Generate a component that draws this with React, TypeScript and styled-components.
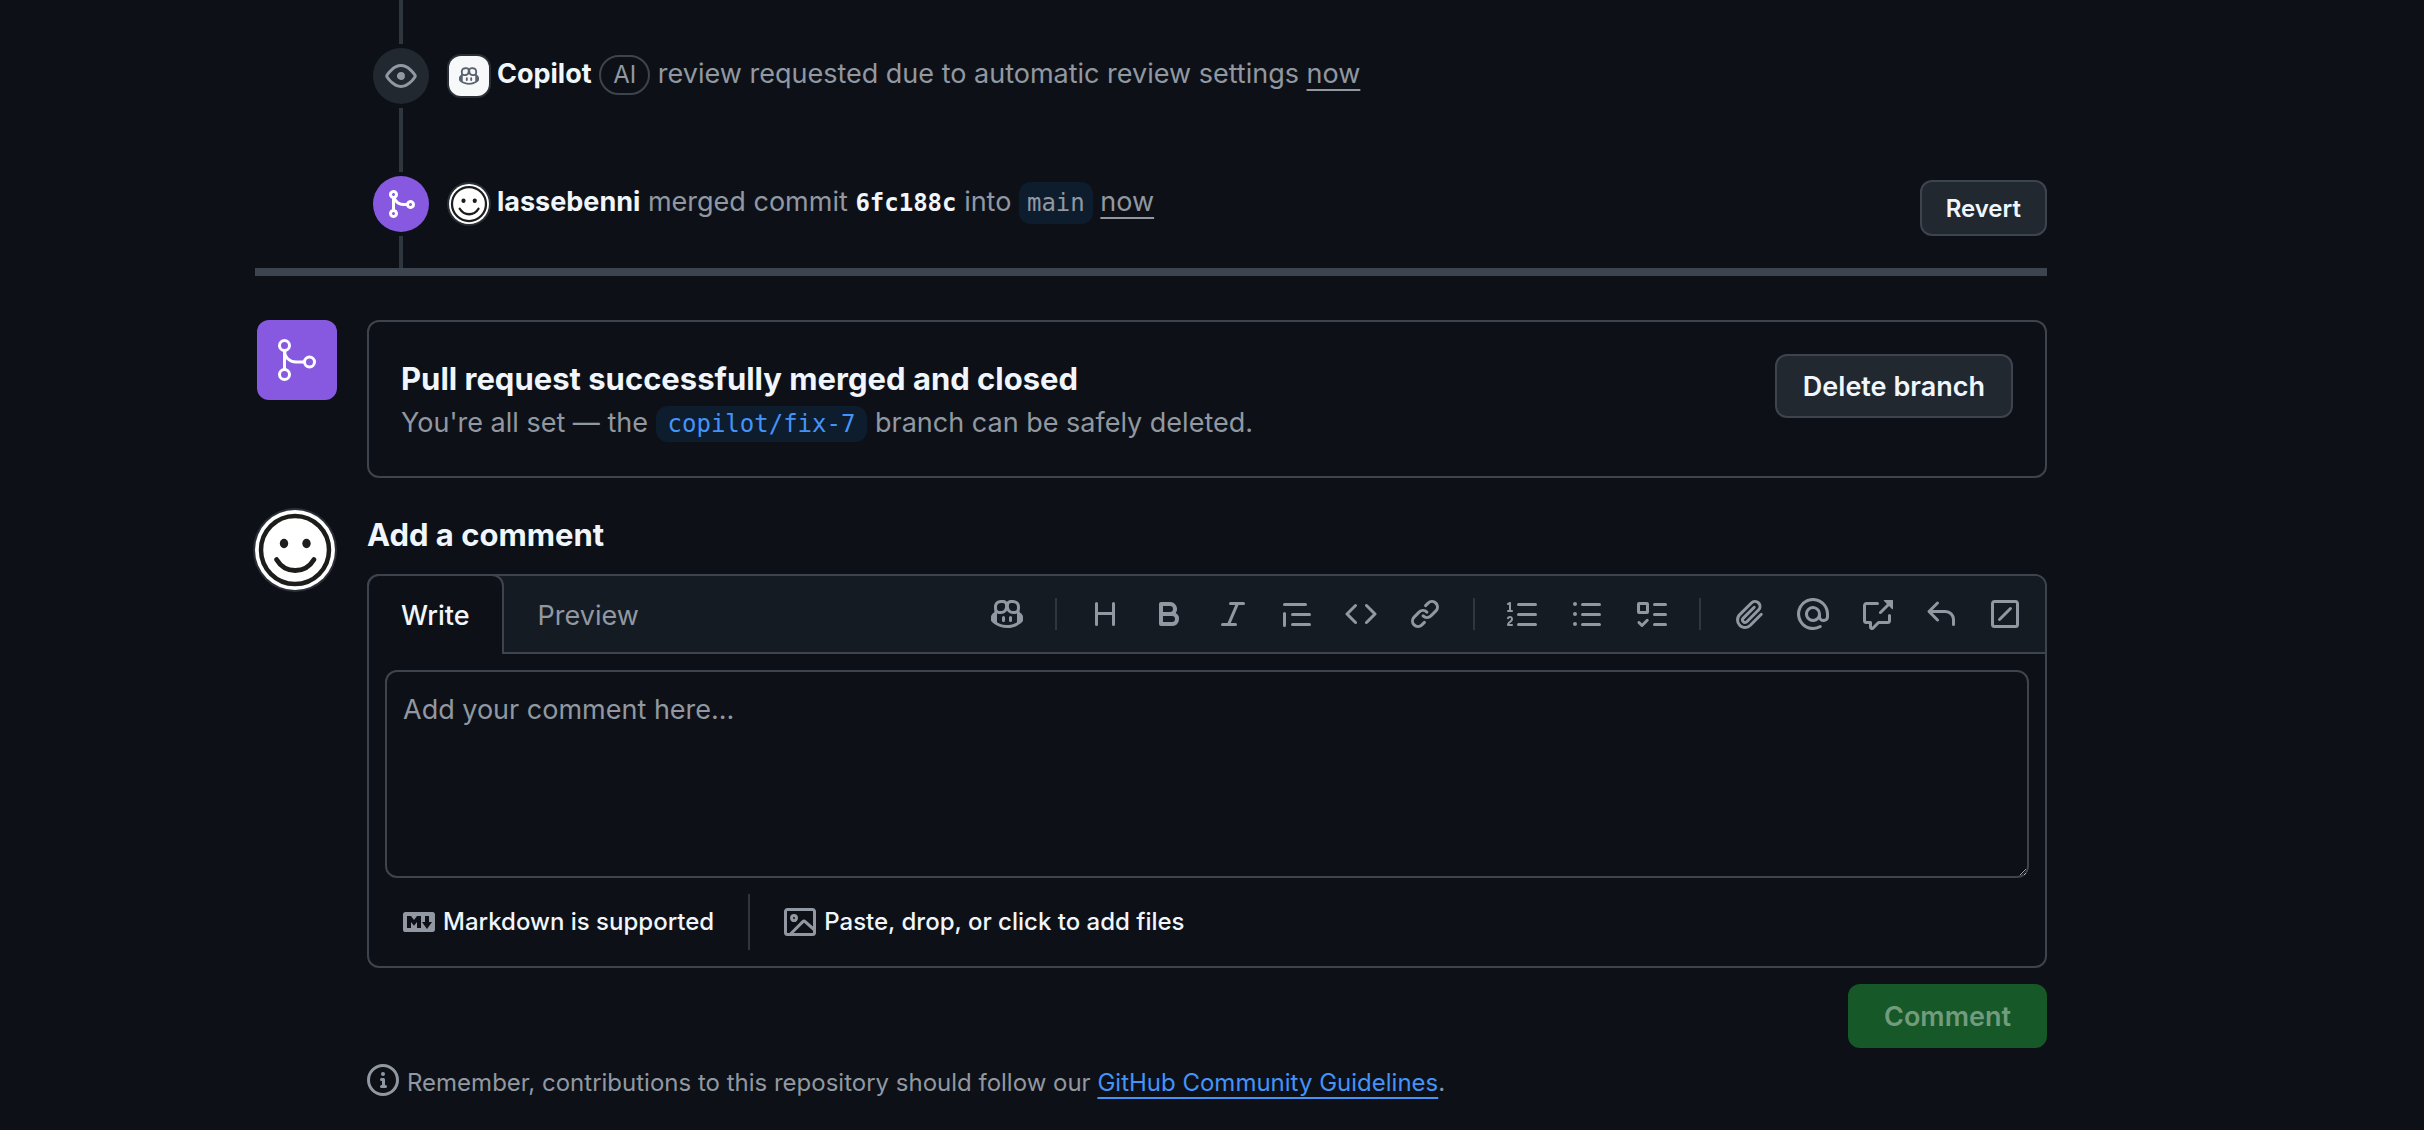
import React from "react";
import styled, { createGlobalStyle, css } from "styled-components";

const color = {
  page: "#0d1117",
  panel: "#151b23",
  control: "#212830",
  border: "#3d444d",
  line: "#30363e",
  text: "#f0f6fc",
  muted: "#9198a1",
  link: "#4493f8",
  linkBg: "#0e1d2e",
  done: "#8759e1",
  success: "#165827",
  successText: "#739b7e",
};

const sans = `Inter, "Noto Sans", "Liberation Sans", sans-serif`;
const mono = `"DejaVu Sans Mono", "Liberation Mono", monospace`;

const GlobalStyle = createGlobalStyle`
  *, *::before, *::after { box-sizing: border-box; }
  html { color-scheme: dark; background: ${color.page}; }
  body {
    margin: 0;
    background: ${color.page};
    color: ${color.text};
    font-family: ${sans};
    font-size: 27px;
    line-height: 42px;
  }
  button, textarea { font-family: inherit; }
`;

const paths = {
  eye: "M8 2c1.981 0 3.671.992 4.933 2.078 1.27 1.091 2.187 2.345 2.637 3.023a1.62 1.62 0 0 1 0 1.798c-.45.678-1.367 1.932-2.637 3.023C11.67 13.008 9.981 14 8 14c-1.981 0-3.671-.992-4.933-2.078C1.797 10.83.88 9.576.43 8.898a1.62 1.62 0 0 1 0-1.798c.45-.677 1.367-1.931 2.637-3.022C4.33 2.992 6.019 2 8 2ZM1.679 7.932a.12.12 0 0 0 0 .136c.411.622 1.241 1.75 2.366 2.717C5.176 11.758 6.527 12.5 8 12.5c1.473 0 2.825-.742 3.955-1.715 1.124-.967 1.954-2.096 2.366-2.717a.12.12 0 0 0 0-.136c-.412-.621-1.242-1.75-2.366-2.717C10.824 4.242 9.473 3.5 8 3.5c-1.473 0-2.825.742-3.955 1.715-1.124.967-1.954 2.096-2.366 2.717ZM8 10a2 2 0 1 1-.001-3.999A2 2 0 0 1 8 10Z",
  merge: "M5.45 5.154A4.25 4.25 0 0 0 9.25 7.5h1.378a2.251 2.251 0 1 1 0 1.5H9.25A5.734 5.734 0 0 1 5 7.123v3.505a2.25 2.25 0 1 1-1.5 0V5.372a2.25 2.25 0 1 1 1.95-.218ZM4.25 13.5a.75.75 0 1 0 0-1.5.75.75 0 0 0 0 1.5Zm8.5-4.5a.75.75 0 1 0 0-1.5.75.75 0 0 0 0 1.5ZM5 3.25a.75.75 0 1 0 0 .005V3.25Z",
  copilot: "M7.998 15.035c-4.562 0-7.873-2.914-7.998-3.749V9.338c.085-.628.677-1.686 1.588-2.065.013-.07.024-.143.036-.218.029-.183.06-.384.126-.612-.201-.508-.254-1.084-.254-1.656 0-.87.128-1.769.693-2.484.579-.733 1.494-1.124 2.724-1.261 1.206-.134 2.262.034 2.944.765.05.053.096.108.139.165.044-.057.094-.112.143-.165.682-.731 1.738-.899 2.944-.765 1.23.137 2.145.528 2.724 1.261.566.715.693 1.614.693 2.484 0 .572-.053 1.148-.254 1.656.066.228.098.429.126.612.012.076.024.148.037.218.924.385 1.522 1.471 1.591 2.095v1.872c0 .766-3.351 3.795-8.002 3.795Zm0-1.485c2.28 0 4.584-1.11 5.002-1.433V7.862l-.023-.116c-.49.21-1.075.291-1.727.291-1.146 0-2.059-.327-2.71-.991A3.222 3.222 0 0 1 8 6.303a3.24 3.24 0 0 1-.544.743c-.65.664-1.563.991-2.71.991-.652 0-1.236-.081-1.727-.291l-.023.116v4.255c.419.323 2.722 1.433 5.002 1.433ZM6.762 2.83c-.193-.206-.637-.413-1.682-.297-1.019.113-1.479.404-1.713.7-.247.312-.369.789-.369 1.554 0 .793.129 1.171.308 1.371.162.181.519.379 1.442.379.853 0 1.339-.235 1.638-.54.315-.322.527-.827.617-1.553.117-.935-.037-1.395-.241-1.614Zm4.155-.297c-1.044-.116-1.488.091-1.681.297-.204.219-.359.679-.242 1.614.091.726.303 1.231.618 1.553.299.305.784.54 1.638.54.922 0 1.28-.198 1.442-.379.179-.2.308-.578.308-1.371 0-.765-.123-1.242-.37-1.554-.233-.296-.693-.587-1.713-.7ZM6.25 9.037a.75.75 0 0 1 .75.75v1.501a.75.75 0 0 1-1.5 0V9.787a.75.75 0 0 1 .75-.75Zm4.25.75v1.501a.75.75 0 0 1-1.5 0V9.787a.75.75 0 0 1 1.5 0Z",
  heading: "M3.75 2a.75.75 0 0 1 .75.75V7h7V2.75a.75.75 0 0 1 1.5 0v10.5a.75.75 0 0 1-1.5 0V8.5h-7v4.75a.75.75 0 0 1-1.5 0V2.75A.75.75 0 0 1 3.75 2Z",
  bold: "M4 2h4.5a3.501 3.501 0 0 1 2.852 5.53A3.499 3.499 0 0 1 9.5 14H4a1 1 0 0 1-1-1V3a1 1 0 0 1 1-1Zm1 7v3h4.5a1.5 1.5 0 0 0 0-3Zm3.5-2a1.5 1.5 0 0 0 0-3H5v3Z",
  italic: "M6 2.75A.75.75 0 0 1 6.75 2h6.5a.75.75 0 0 1 0 1.5h-2.505l-3.858 9H9.25a.75.75 0 0 1 0 1.5h-6.5a.75.75 0 0 1 0-1.5h2.505l3.858-9H6.75A.75.75 0 0 1 6 2.75Z",
  quote: "M1.75 2.5h10.5a.75.75 0 0 1 0 1.5H1.75a.75.75 0 0 1 0-1.5Zm4 5h8.5a.75.75 0 0 1 0 1.5h-8.5a.75.75 0 0 1 0-1.5Zm0 5h8.5a.75.75 0 0 1 0 1.5h-8.5a.75.75 0 0 1 0-1.5ZM2.5 7.75v6a.75.75 0 0 1-1.5 0v-6a.75.75 0 0 1 1.5 0Z",
  code: "m11.28 3.22 4.25 4.25a.75.75 0 0 1 0 1.06l-4.25 4.25a.749.749 0 0 1-1.275-.326.749.749 0 0 1 .215-.734L13.94 8l-3.72-3.72a.749.749 0 0 1 .326-1.275.749.749 0 0 1 .734.215Zm-6.56 0a.751.751 0 0 1 1.042.018.751.751 0 0 1 .018 1.042L2.06 8l3.72 3.72a.749.749 0 0 1-.326 1.275.749.749 0 0 1-.734-.215L.47 8.53a.75.75 0 0 1 0-1.06Z",
  link: "m7.775 3.275 1.25-1.25a3.5 3.5 0 1 1 4.95 4.95l-2.5 2.5a3.5 3.5 0 0 1-4.95 0 .751.751 0 0 1 .018-1.042.751.751 0 0 1 1.042-.018 1.998 1.998 0 0 0 2.83 0l2.5-2.5a2.002 2.002 0 0 0-2.83-2.83l-1.25 1.25a.751.751 0 0 1-1.042-.018.751.751 0 0 1-.018-1.042Zm-4.69 9.64a1.998 1.998 0 0 0 2.83 0l1.25-1.25a.751.751 0 0 1 1.042.018.751.751 0 0 1 .018 1.042l-1.25 1.25a3.5 3.5 0 1 1-4.95-4.95l2.5-2.5a3.5 3.5 0 0 1 4.95 0 .751.751 0 0 1-.018 1.042.751.751 0 0 1-1.042.018 1.998 1.998 0 0 0-2.83 0l-2.5 2.5a1.998 1.998 0 0 0 0 2.83Z",
  ordered: "M5 3.25a.75.75 0 0 1 .75-.75h8.5a.75.75 0 0 1 0 1.5h-8.5A.75.75 0 0 1 5 3.25Zm0 5a.75.75 0 0 1 .75-.75h8.5a.75.75 0 0 1 0 1.5h-8.5A.75.75 0 0 1 5 8.25Zm0 5a.75.75 0 0 1 .75-.75h8.5a.75.75 0 0 1 0 1.5h-8.5a.75.75 0 0 1-.75-.75ZM.924 10.32a.5.5 0 0 1-.851-.525l.001-.001.001-.002.002-.004.007-.011c.097-.144.215-.273.348-.384.228-.19.588-.392 1.068-.392.468 0 .858.181 1.126.484.259.294.377.673.377 1.038 0 .987-.686 1.495-1.156 1.845l-.047.035c-.303.225-.522.4-.654.597h1.357a.5.5 0 0 1 0 1H.5a.5.5 0 0 1-.5-.5c0-1.005.692-1.52 1.167-1.875l.035-.025c.531-.396.8-.625.8-1.078a.57.57 0 0 0-.128-.376C1.806 10.068 1.695 10 1.5 10a.658.658 0 0 0-.429.163.835.835 0 0 0-.144.153ZM2.003 2.5V6h.503a.5.5 0 0 1 0 1H.5a.5.5 0 0 1 0-1h.503V3.308l-.28.14a.5.5 0 0 1-.446-.895l1.003-.5a.5.5 0 0 1 .723.447Z",
  unordered: "M5.75 2.5h8.5a.75.75 0 0 1 0 1.5h-8.5a.75.75 0 0 1 0-1.5Zm0 5h8.5a.75.75 0 0 1 0 1.5h-8.5a.75.75 0 0 1 0-1.5Zm0 5h8.5a.75.75 0 0 1 0 1.5h-8.5a.75.75 0 0 1 0-1.5ZM2 14a1 1 0 1 1 0-2 1 1 0 0 1 0 2Zm1-6a1 1 0 1 1-2 0 1 1 0 0 1 2 0ZM2 4a1 1 0 1 1 0-2 1 1 0 0 1 0 2Z",
  tasks: "M2 2h4a1 1 0 0 1 1 1v4a1 1 0 0 1-1 1H2a1 1 0 0 1-1-1V3a1 1 0 0 1 1-1Zm4.655 8.595a.75.75 0 0 1 0 1.06L4.03 14.28a.75.75 0 0 1-1.06 0l-1.5-1.5a.749.749 0 0 1 .326-1.275.749.749 0 0 1 .734.215l.97.97 2.095-2.095a.75.75 0 0 1 1.06 0ZM9.75 2.5h5.5a.75.75 0 0 1 0 1.5h-5.5a.75.75 0 0 1 0-1.5Zm0 5h5.5a.75.75 0 0 1 0 1.5h-5.5a.75.75 0 0 1 0-1.5Zm0 5h5.5a.75.75 0 0 1 0 1.5h-5.5a.75.75 0 0 1 0-1.5Zm-7.25-9v3h3v-3Z",
  paperclip: "M12.212 3.02a1.753 1.753 0 0 0-2.478.003l-5.83 5.83a3.007 3.007 0 0 0-.88 2.127c0 .795.315 1.551.88 2.116.567.567 1.333.89 2.126.89.79 0 1.548-.321 2.116-.89l5.48-5.48a.75.75 0 0 1 1.061 1.06l-5.48 5.48a4.492 4.492 0 0 1-3.177 1.33c-1.2 0-2.345-.487-3.187-1.33a4.483 4.483 0 0 1-1.32-3.177c0-1.195.475-2.341 1.32-3.186l5.83-5.83a3.25 3.25 0 0 1 5.553 2.297c0 .863-.343 1.691-.953 2.301L7.439 12.39c-.375.377-.884.59-1.416.593a1.998 1.998 0 0 1-1.412-.593 1.992 1.992 0 0 1 0-2.828l5.48-5.48a.751.751 0 0 1 1.042.018.751.751 0 0 1 .018 1.042l-5.48 5.48a.492.492 0 0 0 0 .707.499.499 0 0 0 .352.154.51.51 0 0 0 .356-.154l5.833-5.827a1.755 1.755 0 0 0 0-2.481Z",
  mention: "M4.75 2.37a6.501 6.501 0 0 0 6.5 11.26.75.75 0 0 1 .75 1.298A7.999 7.999 0 0 1 .989 4.148 8 8 0 0 1 16 7.75v1.5a2.75 2.75 0 0 1-5.072 1.475 3.999 3.999 0 0 1-6.65-4.19A4 4 0 0 1 12 8v1.25a1.25 1.25 0 0 0 2.5 0V7.867a6.5 6.5 0 0 0-9.75-5.496ZM10.5 8a2.5 2.5 0 1 0-5 0 2.5 2.5 0 0 0 5 0Z",
  reference: "M2.75 3.5a.25.25 0 0 0-.25.25v7.5c0 .138.112.25.25.25h2a.75.75 0 0 1 .75.75v2.19l2.72-2.72a.749.749 0 0 1 .53-.22h4.5a.25.25 0 0 0 .25-.25v-2.5a.75.75 0 0 1 1.5 0v2.5A1.75 1.75 0 0 1 13.25 13H9.06l-2.573 2.573A1.458 1.458 0 0 1 4 14.543V13H2.75A1.75 1.75 0 0 1 1 11.25v-7.5C1 2.784 1.784 2 2.75 2h5.5a.75.75 0 0 1 0 1.5ZM16 1.25v4.146a.25.25 0 0 1-.427.177L14.03 4.03l-3.75 3.75a.749.749 0 0 1-1.275-.326.749.749 0 0 1 .215-.734l3.75-3.75-1.543-1.543A.25.25 0 0 1 11.604 1h4.146a.25.25 0 0 1 .25.25Z",
  reply: "M6.78 1.97a.75.75 0 0 1 0 1.06L3.81 6h6.44A4.75 4.75 0 0 1 15 10.75v2.5a.75.75 0 0 1-1.5 0v-2.5a3.25 3.25 0 0 0-3.25-3.25H3.81l2.97 2.97a.749.749 0 0 1-.326 1.275.749.749 0 0 1-.734-.215L1.47 7.28a.75.75 0 0 1 0-1.06l4.25-4.25a.75.75 0 0 1 1.06 0Z",
  slash: "M13.25 1c.966 0 1.75.784 1.75 1.75v10.5A1.75 1.75 0 0 1 13.25 15H2.75A1.75 1.75 0 0 1 1 13.25V2.75C1 1.784 1.784 1 2.75 1ZM2.75 2.5a.25.25 0 0 0-.25.25v10.5c0 .138.112.25.25.25h10.5a.25.25 0 0 0 .25-.25V2.75a.25.25 0 0 0-.25-.25Zm8.53 3.28-5.5 5.5a.751.751 0 0 1-1.042-.018.751.751 0 0 1-.018-1.042l5.5-5.5a.751.751 0 0 1 1.042.018.751.751 0 0 1 .018 1.042Z",
  markdown: "M14.85 3c.63 0 1.15.52 1.14 1.15v7.7c0 .63-.51 1.15-1.15 1.15H1.15C.52 13 0 12.48 0 11.84V4.15C0 3.52.52 3 1.15 3ZM9 11V5H7L5.5 7 4 5H2v6h2V8l1.5 1.92L7 8v3Zm2.99.5L14.5 8H13V5h-2v3H9.5Z",
  image: "M16 13.25A1.75 1.75 0 0 1 14.25 15H1.75A1.75 1.75 0 0 1 0 13.25V2.75C0 1.784.784 1 1.75 1h12.5c.966 0 1.75.784 1.75 1.75ZM1.75 2.5a.25.25 0 0 0-.25.25v10.5c0 .138.112.25.25.25h.94l.03-.03 6.077-6.078a1.75 1.75 0 0 1 2.412-.06L14.5 10.31V2.75a.25.25 0 0 0-.25-.25Zm12.5 11a.25.25 0 0 0 .25-.25v-.917l-4.298-3.889a.25.25 0 0 0-.344.009L4.81 13.5ZM7 6a2 2 0 1 1-3.999.001A2 2 0 0 1 7 6ZM5.5 6a.5.5 0 1 0-1 0 .5.5 0 0 0 1 0Z",
  info: "M0 8a8 8 0 1 1 16 0A8 8 0 0 1 0 8Zm8-6.5a6.5 6.5 0 1 0 0 13 6.5 6.5 0 0 0 0-13ZM6.5 7.75A.75.75 0 0 1 7.25 7h1a.75.75 0 0 1 .75.75v2.75h.25a.75.75 0 0 1 0 1.5h-2a.75.75 0 0 1 0-1.5h.25v-2h-.25a.75.75 0 0 1-.75-.75ZM8 6a1 1 0 1 1 0-2 1 1 0 0 1 0 2Z",
};

type IconName = keyof typeof paths;

const IconSvg = styled.svg`
  display: block;
  flex: none;
  fill: currentColor;
`;

function Icon({ name, size = 32 }: { name: IconName; size?: number }) {
  return (
    <IconSvg viewBox="0 0 16 16" width={size} height={size} aria-hidden="true">
      <path d={paths[name]} />
    </IconSvg>
  );
}

function LargeMergeIcon() {
  return (
    <svg width="48" height="48" viewBox="0 0 24 24" fill="none" stroke="#fff" strokeWidth="1.5" aria-hidden="true">
      <circle cx="5.75" cy="4.75" r="2.5" />
      <circle cx="5.75" cy="19.25" r="2.5" />
      <circle cx="18.25" cy="13" r="2.5" />
      <path d="M5.75 7.25v9.5M5.75 7.25c0 3.4 2.4 5.75 5.75 5.75h4.25" />
    </svg>
  );
}

const Page = styled.main`
  padding: 0 377px 24px 255px;
`;

const Timeline = styled.section`
  border-bottom: 8px solid ${color.border};
  margin-bottom: 44px;
`;

const TimelineItem = styled.div`
  display: flex;
  gap: 20px;
  padding-left: 118px;
`;

const Rail = styled.div`
  display: flex;
  flex-direction: column;
  align-items: center;
  gap: 4px;
  width: 56px;
`;

const RailLine = styled.span<{ $length: number }>`
  width: 4px;
  height: ${(p) => p.$length}px;
  background: ${color.line};
`;

const Badge = styled.span<{ $done?: boolean }>`
  display: flex;
  align-items: center;
  justify-content: center;
  width: 56px;
  height: 56px;
  border-radius: 50%;
  color: ${(p) => (p.$done ? "#fff" : color.muted)};
  background: ${(p) => (p.$done ? color.done : color.control)};
`;

const TimelineBody = styled.div<{ $lead: number }>`
  flex: 1;
  display: flex;
  align-items: flex-start;
  justify-content: space-between;
  padding-top: ${(p) => p.$lead + 8}px;
  color: ${color.muted};
`;

const EventText = styled.p`
  margin: 0;
  line-height: 44px;
`;

const avatarRing = css`
  background: #fff;
  box-shadow: 0 0 0 2px #2b3038;
`;

const inlineAvatar = css`
  width: 40px;
  height: 40px;
  margin-right: 8px;
  vertical-align: middle;
`;

const CopilotAvatar = styled.span`
  ${avatarRing}
  ${inlineAvatar}
  display: inline-flex;
  align-items: center;
  justify-content: center;
  border-radius: 12px;
  background: #f6f8fa;
  color: #59636e;
`;

const FaceSvg = styled.svg<{ $inline?: boolean }>`
  ${avatarRing}
  border-radius: 50%;
  ${(p) =>
    p.$inline
      ? inlineAvatar
      : css`
          display: block;
          width: 80px;
          height: 80px;
        `}
`;

function Face({ inline }: { inline?: boolean }) {
  return (
    <FaceSvg $inline={inline} viewBox="0 0 80 80" role="img" aria-label="lassebenni">
      <circle cx="40" cy="40" r="34" fill="#fff" stroke="#1d1d1b" strokeWidth="4.5" />
      <ellipse cx="29" cy="33.5" rx="4.2" ry="4.7" fill="#1d1d1b" />
      <ellipse cx="51.5" cy="33.5" rx="4.2" ry="4.7" fill="#1d1d1b" />
      <path d="M21.5 49.5C26 57 33 60.5 40.2 60.5S54.5 57 59 49.5" fill="none" stroke="#1d1d1b" strokeWidth="4.8" strokeLinecap="round" />
    </FaceSvg>
  );
}

const Actor = styled.a`
  color: ${color.text};
  font-weight: 700;
  text-decoration: none;
`;

const AiLabel = styled.span`
  display: inline-block;
  padding: 0 12px;
  border: 2px solid ${color.border};
  border-radius: 20px;
  font-size: 24px;
  line-height: 36px;
`;

const TimeLink = styled.a`
  color: inherit;
  text-decoration: underline;
  text-decoration-thickness: 2px;
  text-underline-offset: 6px;
`;

const CommitLink = styled.a`
  color: ${color.text};
  font: 700 24px ${mono};
  text-decoration: none;
`;

const BranchTag = styled.a<{ $accent?: boolean }>`
  padding: ${(p) => (p.$accent ? "4px 12px" : "7px 8px")};
  border-radius: 12px;
  background: ${color.linkBg};
  color: ${(p) => (p.$accent ? color.link : color.muted)};
  font: 24px ${mono};
  text-decoration: none;
`;

const Button = styled.button<{ $small?: boolean }>`
  flex: none;
  height: ${(p) => (p.$small ? 56 : 64)}px;
  padding: 0 ${(p) => (p.$small ? 24 : 26)}px;
  border: 2px solid ${color.border};
  border-radius: 12px;
  background: ${color.control};
  color: ${color.text};
  font-size: ${(p) => (p.$small ? 24 : 27)}px;
  font-weight: 600;
`;

const SubmitButton = styled(Button)`
  align-self: flex-end;
  padding: 0 34px;
  border-color: ${color.success};
  background: ${color.success};
  color: ${color.successText};
`;

const Row = styled.section`
  display: grid;
  grid-template-columns: 82px minmax(0, 1fr);
  column-gap: 30px;
  align-items: start;
  margin-bottom: 32px;
`;

const MergeTile = styled.span`
  justify-self: end;
  display: flex;
  align-items: center;
  justify-content: center;
  width: 80px;
  height: 80px;
  border-radius: 12px;
  background: ${color.done};
`;

const MergeCard = styled.div`
  display: flex;
  justify-content: space-between;
  align-items: flex-start;
  padding: 32px;
  border: 2px solid ${color.border};
  border-radius: 12px;
`;

const Title = styled.h2`
  margin: 0;
  padding-top: 2px;
  font-size: 31px;
  line-height: 46px;
  font-weight: 700;
`;

const CardText = styled.p`
  margin: 0;
  color: ${color.muted};
`;

const CommentForm = styled.form`
  display: flex;
  flex-direction: column;
  gap: 16px;
`;

const Editor = styled.div`
  border: 2px solid ${color.border};
  border-radius: 12px;
`;

const EditorHeader = styled.div`
  display: flex;
  justify-content: space-between;
  height: 78px;
  border-bottom: 2px solid ${color.border};
  border-radius: 10px 10px 0 0;
  background: ${color.panel};
`;

const Tabs = styled.div`
  display: flex;
  margin: -2px;
`;

const Tab = styled.button<{ $active?: boolean }>`
  padding: 0 32px;
  border: 2px solid transparent;
  border-bottom: 0;
  border-radius: 12px 12px 0 0;
  background: transparent;
  color: ${color.muted};
  font-size: 27px;
  ${(p) =>
    p.$active &&
    css`
      border-color: ${color.border};
      background: ${color.page};
      color: ${color.text};
      font-weight: 500;
    `}
`;

const Toolbar = styled.div`
  display: flex;
  align-items: center;
  padding-right: 8px;
`;

const ToolButton = styled.button`
  display: flex;
  align-items: center;
  justify-content: center;
  width: 64px;
  height: 64px;
  padding: 0;
  border: 0;
  background: transparent;
  color: ${color.muted};
`;

const Divider = styled.span<{ $length: number }>`
  width: 2px;
  height: ${(p) => p.$length}px;
  margin: 0 16px;
  background: ${color.line};
`;

const CommentBox = styled.textarea`
  display: block;
  width: calc(100% - 32px);
  height: 208px;
  margin: 16px;
  padding: 16px;
  border: 2px solid ${color.border};
  border-radius: 12px;
  background: ${color.page};
  color: ${color.text};
  font-size: 27px;
  line-height: 44px;
  resize: vertical;
  &::placeholder {
    color: ${color.muted};
    opacity: 1;
  }
`;

const EditorFooter = styled.div`
  display: flex;
  align-items: center;
  padding: 0 16px 16px;
`;

const footerAction = css`
  display: flex;
  align-items: center;
  gap: 8px;
  height: 56px;
  padding: 0 18px;
  border: 0;
  background: transparent;
  color: ${color.text};
  font-size: 24px;
  font-weight: 500;
  line-height: 36px;
  text-decoration: none;
  svg {
    color: ${color.muted};
  }
`;

const FooterLink = styled.a`
  ${footerAction}
`;

const FooterButton = styled.button`
  ${footerAction}
`;

const Reminder = styled.p`
  display: flex;
  gap: 8px;
  margin: 0;
  color: ${color.muted};
  font-size: 24px;
  line-height: 38px;
`;

const GuideLink = styled(TimeLink)`
  color: ${color.link};
`;

const toolGroups: [IconName, string][][] = [
  [["copilot", "Copilot"]],
  [
    ["heading", "Heading"],
    ["bold", "Bold"],
    ["italic", "Italic"],
    ["quote", "Quote"],
    ["code", "Code"],
    ["link", "Link"],
  ],
  [
    ["ordered", "Numbered list"],
    ["unordered", "Unordered list"],
    ["tasks", "Task list"],
  ],
  [
    ["paperclip", "Attach files"],
    ["mention", "Mention"],
    ["reference", "Reference"],
    ["reply", "Saved replies"],
    ["slash", "Slash commands"],
  ],
];

export default function App() {
  return (
    <>
      <GlobalStyle />
      <Page>
        <Timeline>
          <TimelineItem>
            <Rail>
              <RailLine $length={44} />
              <Badge>
                <Icon name="eye" />
              </Badge>
              <RailLine $length={32} />
            </Rail>
            <TimelineBody $lead={44}>
              <EventText>
                <CopilotAvatar>
                  <Icon name="copilot" size={20} />
                </CopilotAvatar>
                <Actor href="#copilot">Copilot</Actor> <AiLabel>AI</AiLabel> review requested due to automatic review
                settings <TimeLink href="#review">now</TimeLink>
              </EventText>
            </TimelineBody>
          </TimelineItem>
          <TimelineItem>
            <Rail>
              <RailLine $length={32} />
              <Badge $done>
                <Icon name="merge" />
              </Badge>
              <RailLine $length={32} />
            </Rail>
            <TimelineBody $lead={32}>
              <EventText>
                <Face inline />
                <Actor href="#lassebenni">lassebenni</Actor> merged commit{" "}
                <CommitLink href="#commit">6fc188c</CommitLink> into <BranchTag href="#main">main</BranchTag>{" "}
                <TimeLink href="#merged">now</TimeLink>
              </EventText>
              <Button $small type="button">
                Revert
              </Button>
            </TimelineBody>
          </TimelineItem>
        </Timeline>

        <Row>
          <MergeTile>
            <LargeMergeIcon />
          </MergeTile>
          <MergeCard>
            <div>
              <Title>Pull request successfully merged and closed</Title>
              <CardText>
                You're all set — the{" "}
                <BranchTag $accent href="#branch">
                  copilot/fix-7
                </BranchTag>{" "}
                branch can be safely deleted.
              </CardText>
            </div>
            <Button type="button">Delete branch</Button>
          </MergeCard>
        </Row>

        <Row>
          <Face />
          <CommentForm>
            <Title as="label" htmlFor="comment">
              Add a comment
            </Title>
            <Editor>
              <EditorHeader>
                <Tabs role="tablist">
                  <Tab $active type="button" role="tab" aria-selected="true">
                    Write
                  </Tab>
                  <Tab type="button" role="tab" aria-selected="false">
                    Preview
                  </Tab>
                </Tabs>
                <Toolbar role="toolbar" aria-label="Formatting tools">
                  {toolGroups.map((group, index) => (
                    <React.Fragment key={group[0][0]}>
                      {index > 0 && <Divider $length={32} />}
                      {group.map(([name, label]) => (
                        <ToolButton key={name} type="button" aria-label={label}>
                          <Icon name={name} />
                        </ToolButton>
                      ))}
                    </React.Fragment>
                  ))}
                </Toolbar>
              </EditorHeader>
              <CommentBox id="comment" placeholder="Add your comment here..." />
              <EditorFooter>
                <FooterLink href="#markdown">
                  <Icon name="markdown" />
                  Markdown is supported
                </FooterLink>
                <Divider $length={56} />
                <FooterButton type="button">
                  <Icon name="image" />
                  Paste, drop, or click to add files
                </FooterButton>
              </EditorFooter>
            </Editor>
            <SubmitButton type="submit" disabled>
              Comment
            </SubmitButton>
            <Reminder>
              <Icon name="info" />
              <span>
                Remember, contributions to this repository should follow our{" "}
                <GuideLink href="#guidelines">GitHub Community Guidelines</GuideLink>.
              </span>
            </Reminder>
          </CommentForm>
        </Row>
      </Page>
    </>
  );
}
